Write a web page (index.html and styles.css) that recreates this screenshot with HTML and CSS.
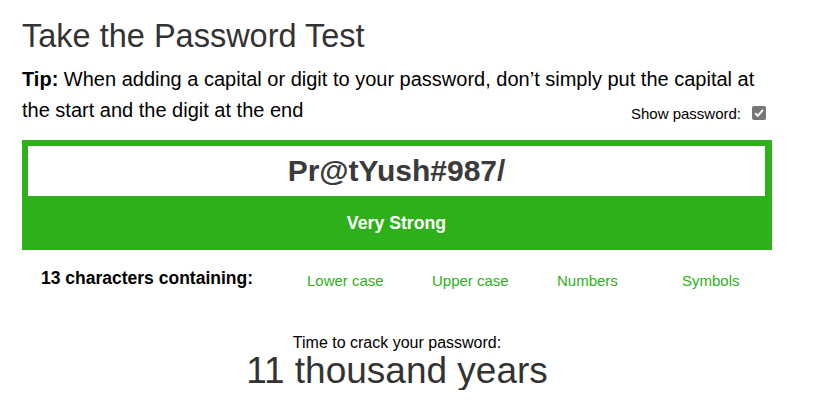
FILE: index.html
```html
<!DOCTYPE html>
<html>
<head>
<meta charset="utf-8">
<link rel="stylesheet" href="styles.css">
</head>
<body>
<div class="page">
  <h1 class="title">Take the Password Test</h1>
  <div class="tip">
    <p class="tip-line"><b>Tip:</b> When adding a capital or digit to your password, don’t simply put the capital at</p>
    <div class="tip-row">
      <span class="tip-text">the start and the digit at the end</span>
      <div class="show">
        <span class="show-label">Show password:</span>
        <span class="check"><svg width="14" height="14" viewBox="0 0 14 14"><rect width="14" height="14" rx="2" fill="#767676"/><path d="M3.2 7.3 L5.8 9.8 L10.9 3.9" fill="none" stroke="#fff" stroke-width="2"/></svg></span>
      </div>
    </div>
  </div>
  <div class="meter">
    <div class="pw">Pr@tYush#987/</div>
    <div class="strength">Very Strong</div>
  </div>
  <div class="contains">
    <div class="count">13 characters containing:</div>
    <div class="kind">Lower case</div>
    <div class="kind">Upper case</div>
    <div class="kind">Numbers</div>
    <div class="kind">Symbols</div>
  </div>
  <div class="crack">
    <div class="crack-label">Time to crack your password:</div>
    <div class="crack-value">11 thousand years</div>
  </div>
</div>
</body>
</html>
```
FILE: styles.css
```css
html, body {
  margin: 0;
  padding: 0;
  background: #fff;
}
body {
  font-family: "Liberation Sans", Arial, sans-serif;
  color: #000;
}
.page {
  width: 750px;
  padding: 16px 0 0 22px;
}
.title {
  margin: 0;
  font-size: 32.5px;
  font-weight: normal;
  color: #333;
  line-height: 40px;
}
.tip {
  margin-top: 8px;
  font-size: 20px;
  line-height: 31px;
  color: #000;
}
.tip-line {
  margin: 0;
}
.tip-line b {
  font-weight: bold;
}
.tip-row {
  display: flex;
  justify-content: space-between;
  align-items: flex-start;
  height: 31px;
}
.show {
  display: flex;
  align-items: center;
  gap: 11px;
  padding-right: 6px;
  padding-top: 7px;
  line-height: 18px;
}
.show-label {
  font-size: 15px;
  color: #000;
  padding-top: 3px;
}
.check {
  display: flex;
}
.meter {
  margin-top: 14px;
  background: #2db01a;
  padding: 6px 7px 0 6px;
  height: 104px;
}
.pw {
  background: #fff;
  height: 50px;
  font-size: 30px;
  font-weight: bold;
  color: #3b3b3b;
  text-align: center;
  line-height: 50px;
}
.strength {
  color: #fff;
  font-weight: bold;
  font-size: 17.7px;
  text-align: center;
  line-height: 54px;
}
.contains {
  display: grid;
  grid-template-columns: 250px repeat(4, 125px);
  align-items: baseline;
  margin-top: 18px;
}
.count {
  font-weight: bold;
  font-size: 17.5px;
  text-align: center;
}
.kind {
  color: #2db01a;
  font-size: 15px;
  padding-left: 35px;
  position: relative;
  top: 2px;
}
.crack {
  margin-top: 45px;
  text-align: center;
}
.crack-label {
  font-size: 16px;
  line-height: 18px;
}
.crack-value {
  font-size: 37px;
  line-height: 38px;
  color: #333;
}
```
